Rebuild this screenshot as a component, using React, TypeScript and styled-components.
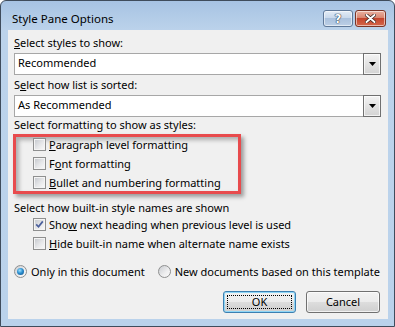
import React from 'react';
import styled, { createGlobalStyle } from 'styled-components';

const GlobalStyle = createGlobalStyle`
  html, body {
    margin: 0;
    padding: 0;
    background: #ffffff;
  }
  body {
    font-family: "Noto Sans", "Segoe UI", sans-serif;
    font-size: 11px;
    color: #000;
  }
`;

const Window = styled.div`
  width: 395px;
  height: 327px;
  box-sizing: border-box;
  border: 1px solid #3f4c5c;
  border-radius: 6px 6px 0 0;
  background: linear-gradient(#a7c3e3, #bcd3eb 30px, #bad2eb);
  padding: 0 6px 7px 7px;
  display: flex;
  flex-direction: column;
`;

const TitleBar = styled.div`
  height: 29px;
  flex: none;
  display: flex;
  align-items: flex-start;
`;

const Title = styled.div`
  flex: 1;
  margin: 10px 0 0 4px;
  font-size: 11.5px;
  line-height: 15px;
  color: #000;
`;

const CaptionButtons = styled.div`
  display: flex;
  gap: 2px;
  margin: 9px 2px 0 0;
`;

const CaptionButton = styled.div<{ $close?: boolean }>`
  width: ${({ $close }) => ($close ? 31 : 30)}px;
  height: 17px;
  box-sizing: border-box;
  border-radius: 3px;
  border: 1px solid ${({ $close }) => ($close ? '#7a3426' : '#5f7898')};
  background: ${({ $close }) =>
    $close
      ? 'linear-gradient(#eab2a2, #d98670 45%, #c4452d 50%, #d4674c)'
      : 'linear-gradient(#e3ecf6, #c9d9ec 45%, #aac1dd 50%, #bccfe6)'};
  box-shadow: inset 0 0 0 1px rgba(255, 255, 255, 0.55);
  display: flex;
  align-items: center;
  justify-content: center;
  color: #fff;
  font-family: "DejaVu Sans", sans-serif;
  font-weight: bold;
  font-size: 12px;
  line-height: 1;
  text-shadow: 0 0 1px #25364d, 0 0 1px #25364d, 0 0 1px #25364d;
`;

const Client = styled.div`
  flex: 1;
  background: #f0f0f0;
  padding: 5px 0 0 0;
  display: flex;
  flex-direction: column;
`;

const Label = styled.div<{ $top: number }>`
  margin: ${({ $top }) => $top}px 0 0 6px;
  line-height: 15px;
  height: 15px;
  white-space: nowrap;
`;

const Key = styled.span`
  text-decoration: underline;
  text-underline-offset: 1px;
`;

const Select = styled.div<{ $top: number }>`
  margin: ${({ $top }) => $top}px 0 0 6px;
  width: 367px;
  height: 22px;
  box-sizing: border-box;
  border: 1px solid #a7a7a7;
  background: #fff;
  display: flex;
`;

const SelectText = styled.span`
  flex: 1;
  padding-left: 3px;
  line-height: 18px;
`;

const SelectArrow = styled.span`
  width: 18px;
  margin: -1px -1px -1px 0;
  box-sizing: border-box;
  border: 1px solid #707070;
  background: linear-gradient(#f4f4f4, #e3e3e3 50%, #d3d3d3);
  box-shadow: inset 0 0 0 1px rgba(255, 255, 255, 0.7);
  display: flex;
  align-items: center;
  justify-content: center;
`;

const Highlight = styled.div`
  margin: 2px 0 0 5px;
  width: 228px;
  height: 60px;
  box-sizing: border-box;
  border: 3px solid #e84b4d;
  box-shadow: 3px 3px 4px rgba(0, 0, 0, 0.35), inset 3px 3px 4px rgba(0, 0, 0, 0.28);
`;

const HighlightRows = styled.div`
  margin: -2px 0 0 17px;
`;

const Options = styled.div`
  margin-left: 25px;
`;

const CheckRow = styled.div`
  height: 19px;
  display: flex;
  align-items: center;
  gap: 3px;
  white-space: nowrap;
`;

const Box = styled.span`
  width: 13px;
  height: 13px;
  flex: none;
  box-sizing: border-box;
  border: 1px solid #8e8f8f;
  background: #f4f4f4;
  padding: 1px;
  display: flex;
  position: relative;
  &::before {
    content: '';
    flex: 1;
    background: linear-gradient(135deg, #c8cbd0, #e6e7e9 55%, #f7f7f7);
  }
  svg {
    position: absolute;
    left: 1px;
    top: 1px;
  }
`;

const RadioRow = styled.div`
  margin: 9px 0 0 6px;
  height: 19px;
  display: flex;
  align-items: center;
  white-space: nowrap;
`;

const RadioOption = styled.div`
  display: flex;
  align-items: center;
  gap: 4px;
  margin-right: 13px;
`;

const RadioDot = styled.span<{ $on?: boolean }>`
  width: 13px;
  height: 13px;
  flex: none;
  box-sizing: border-box;
  border-radius: 50%;
  border: 1px solid #8e8f8f;
  background: linear-gradient(135deg, #c9ccd1, #eeeeef 60%, #fafafa);
  display: flex;
  align-items: center;
  justify-content: center;
  &::after {
    content: '';
    display: ${({ $on }) => ($on ? 'block' : 'none')};
    width: 7px;
    height: 7px;
    border-radius: 50%;
    background: radial-gradient(circle at 40% 35%, #9fe3ff 0, #2c8fd0 45%, #0e4a82 100%);
  }
`;

const ButtonRow = styled.div`
  margin-top: 10px;
  padding-right: 8px;
  display: flex;
  justify-content: flex-end;
  gap: 10px;
`;

const Button = styled.div<{ $default?: boolean }>`
  width: ${({ $default }) => ($default ? 73 : 74)}px;
  height: 22px;
  box-sizing: border-box;
  border-radius: 3px;
  border: 1px solid ${({ $default }) => ($default ? '#3c7fb1' : '#707070')};
  background: linear-gradient(#f2f2f2, #ebebeb 50%, #dddddd 50%, #cfcfcf);
  box-shadow: inset 0 0 0 1px ${({ $default }) => ($default ? '#8fd6f6' : 'rgba(255,255,255,0.7)')};
  display: flex;
  align-items: center;
  justify-content: center;
  position: relative;
  line-height: 20px;
`;

const Focus = styled.span`
  position: absolute;
  inset: 3px;
  border: 1px dotted #000;
`;

const Check = ({ checked, children }: { checked?: boolean; children: React.ReactNode }) => (
  <CheckRow>
    <Box>
      {checked && (
        <svg width="9" height="9" viewBox="0 0 9 9">
          <path d="M1.2 4.4 L3.5 6.8 L7.8 1.4" fill="none" stroke="#4a5f9c" strokeWidth="1.7" />
        </svg>
      )}
    </Box>
    <span>{children}</span>
  </CheckRow>
);

const App = () => (
  <>
    <GlobalStyle />
    <Window>
      <TitleBar>
        <Title>Style Pane Options</Title>
        <CaptionButtons>
          <CaptionButton>?</CaptionButton>
          <CaptionButton $close>
            <svg width="11" height="9" viewBox="0 0 11 9">
              <path d="M1.5 1 L9.5 8 M9.5 1 L1.5 8" stroke="#3a2420" strokeWidth="3.4" strokeLinecap="round" />
              <path d="M1.5 1 L9.5 8 M9.5 1 L1.5 8" stroke="#fff" strokeWidth="1.9" strokeLinecap="round" />
            </svg>
          </CaptionButton>
        </CaptionButtons>
      </TitleBar>
      <Client>
        <Label $top={0}>
          <Key>S</Key>elect styles to show:
        </Label>
        <Select $top={3}>
          <SelectText>Recommended</SelectText>
          <SelectArrow>
            <svg width="7" height="4" viewBox="0 0 7 4">
              <polygon points="0,0 7,0 3.5,4" fill="#000" />
            </svg>
          </SelectArrow>
        </Select>
        <Label $top={2}>
          S<Key>e</Key>lect how list is sorted:
        </Label>
        <Select $top={3}>
          <SelectText>As Recommended</SelectText>
          <SelectArrow>
            <svg width="7" height="4" viewBox="0 0 7 4">
              <polygon points="0,0 7,0 3.5,4" fill="#000" />
            </svg>
          </SelectArrow>
        </Select>
        <Label $top={0}>Select formatting to show as styles:</Label>
        <Highlight>
          <HighlightRows>
            <Check>
              <Key>P</Key>aragraph level formatting
            </Check>
            <Check>
              F<Key>o</Key>nt formatting
            </Check>
            <Check>
              <Key>B</Key>ullet and numbering formatting
            </Check>
          </HighlightRows>
        </Highlight>
        <Label $top={6}>Select how built-in style names are shown</Label>
        <Options>
          <Check checked>
            Sho<Key>w</Key> next heading when previous level is used
          </Check>
          <Check>
            <Key>H</Key>ide built-in name when alternate name exists
          </Check>
        </Options>
        <RadioRow>
          <RadioOption>
            <RadioDot $on />
            <span>Only in this document</span>
          </RadioOption>
          <RadioOption>
            <RadioDot />
            <span>New documents based on this template</span>
          </RadioOption>
        </RadioRow>
        <ButtonRow>
          <Button $default>
            <Focus />
            OK
          </Button>
          <Button>Cancel</Button>
        </ButtonRow>
      </Client>
    </Window>
  </>
);

export default App;
